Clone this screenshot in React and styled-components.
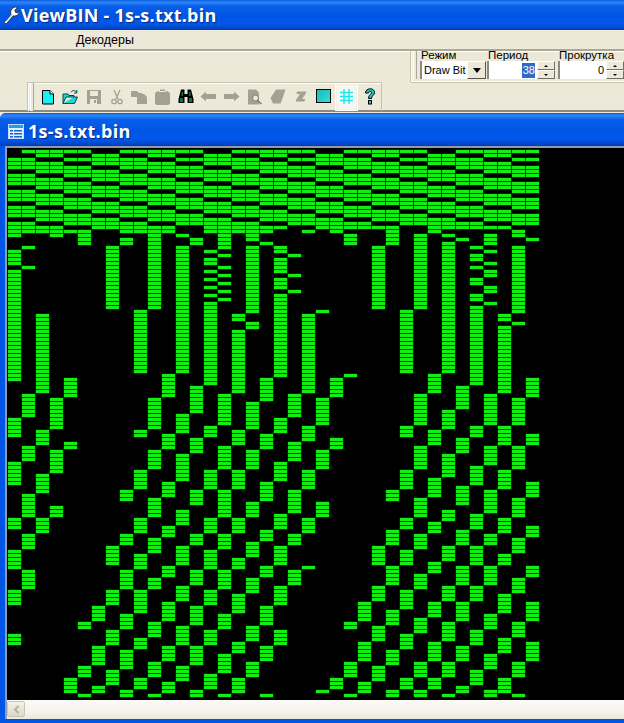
import React from 'react'
import styled, { createGlobalStyle } from 'styled-components'

// bit plot: rows set per column, index = column, values = row ranges below the header pattern
const COLUMNS = [
  '20-21,25-28,30-57,67-71,78-83,92-94,100-104,110-113,121-123',
  '20,24,29,61-66,74-77,86-91,96-99,105-109',
  '20,41-60,70-73,81-85,92-95',
  '20-21,62-69,75-80,89-91',
  '20,57-61,73-74,132-135',
  '20-23,118-119,129-131,136',
  '114-117,124-128,134-135',
  '24-39,99-103,110-113,120-123,130-133',
  '20,22-23,85-87,96-98,105-109,116-119,125-129,135-136',
  '20,40-55,70-71,80-84,92-95,101-104,110-115,122-124,132-134',
  '20-39,62-69,75-79,87-91,97-100,107-109,118-121,128-131,136',
  '20,56-61,71-74,83-86,94-96,104-106,113-117,124-127,133-135',
  '21,24-55,66-70,76-82,90-93,99-103,109-112,119-123,129-132',
  '22-23,59-65,72-75,85-88,96-98,105-108,114-118,124-128,135-136',
  '20,25,27-28,30,32,34,36,38-58,69-71,80-84,92-95,100-104,110-113,120-123,131-134',
  '20-24,26,29,31,33,35,37,61-68,74-79,85-91,96-99,105-109,116-119,126-130,136',
  '20,41-42,45-60,70-73,80-84,92-95,102-104,111-115,123-125,132-135',
  '20-22,24-40,43-44,63-69,75-79,88-91,98-101,107-110,119-122,128-131',
  '20,23,57-62,71-74,83-87,95-97,104-106,114-118,124-127,136',
  '24-25,27-30,32-34,36-56,67-70,78-82,91-94,99-103,109-113,120-123',
  '26,31,35,61-66,73-77,85-90,96-98,105-108',
  '20,41-60,69-72,80-84,92-95,104',
  '40,62-68,75-79,88-91,135',
  '20,57-61,72-74,132-134',
  '21-23,56,118-119,128-131,136',
  '113-117,123-127,133-135',
  '24-39,99-103,109-112,119-122,129-132',
  '20-23,85-87,95-98,104-108,115-118,125-128,135-136',
  '40-55,69-71,80-84,92-94,100-103,110-114,121-124,132-134',
  '21-39,61-68,74-79,87-91,96-99,106-109,117-120,128-131,135-136',
  '20,56-60,70-73,82-86,93-95,103-105,113-116,123-127,132-134',
  '21,23-55,65-69,76-81,90-92,99-102,109-112,118-122,128-131,136',
  '22,59-64,72-75,84-88,95-98,104-108,113-117,124-127,134-135',
  '24,26-27,29,32-33,36-37,39-58,69-71,79-83,91-94,99-103,109-112,120-123,130-133',
  '21-23,25,28,30-31,34-35,38,61-68,74-78,85-90,96-98,104-108,116-119,126-129,135-136',
  '41-42,44-60,69-73,80-84,92-95,101-103,111-115,122-125,132-135',
  '20-21,24-40,43,62-68,74-79,87-91,97-100,107-110,118-121,128-131,136',
  '22,57-61,71-73,83-86,94-96,104-106,113-117,123-127',
]

// the first 20 rows repeat: each pair of columns has a blank row every 4, its phase moving by pair
const headerOn = (col, row) => {
  const pair = Math.floor(col / 2)
  const blank = (pair + 1) % 4
  if (row % 4 === blank) return false
  if (row === 0 && col === 0) return false
  if (blank === 3 && row === 1) return false
  return true
}

const buildBits = () => {
  let d = ''
  const bar = (c, r) => { d += `M${c * 14} ${r * 4}h13v3h-13z` }
  COLUMNS.forEach((spec, c) => {
    for (let r = 0; r < 20; r++) if (headerOn(c, r)) bar(c, r)
    spec.split(',').forEach(part => {
      const [from, to] = part.split('-').map(Number)
      for (let r = from; r <= (to || from); r++) bar(c, r)
    })
  })
  return d
}

const Global = createGlobalStyle`
  html, body { margin: 0; padding: 0; background: #ece9d8; }
  * { box-sizing: border-box; }
`

const Page = styled.div`
  width: 624px;
  height: 723px;
  overflow: hidden;
  display: flex;
  flex-direction: column;
  background: #ece9d8;
  font-family: "Liberation Sans", Arial, sans-serif;
  color: #000;
`

const blueBar = `linear-gradient(180deg, #0a5ce0 0%, #2b86f5 8%, #0a5fe8 20%, #0055e5 55%, #0058ea 80%, #0048cc 92%, #003fb0 100%)`

const TitleBar = styled.div`
  height: 30px;
  flex: none;
  display: flex;
  align-items: center;
  padding-left: 2px;
  gap: 1px;
  background: ${blueBar};
`

const TitleText = styled.span`
  font-family: "Open Sans", "DejaVu Sans", sans-serif;
  font-weight: 700;
  color: #fff;
  font-size: ${p => p.$size}px;
  letter-spacing: ${p => p.$spacing}px;
  text-shadow: 1px 1px 1px #0a2a80;
  white-space: nowrap;
`

const MenuBar = styled.div`
  height: 21px;
  flex: none;
  display: flex;
  align-items: center;
  padding-left: 76px;
  font-size: 12.5px;
  border-bottom: 2px solid;
  border-color: #aca899;
  box-shadow: 0 1px 0 #fff;
`

const Docks = styled.div`
  height: 61px;
  flex: none;
  display: flex;
  flex-direction: column;
  border-bottom: 2px solid #8c8a80;
`

const TopDock = styled.div`
  height: 31px;
  display: flex;
  justify-content: flex-end;
`

const ModeBar = styled.div`
  width: 213px;
  display: flex;
  align-items: flex-end;
  gap: 1px;
  padding: 0 0 2px 1px;
  border-bottom: 1px solid #fff;
  border-left: 1px solid #fff;
  box-shadow: -1px 0 0 #c5c2b0, 0 1px 0 #c5c2b0;
`

const Grip = styled.div`
  width: 4px;
  align-self: stretch;
  margin-right: ${p => p.$gap}px;
  border-left: 1px solid #fff;
  border-right: 1px solid #aca899;
  background: #ece9d8;
  flex: none;
`

const Field = styled.div`
  width: ${p => p.$w}px;
  margin-right: ${p => p.$gap || 0}px;
  flex: none;
  display: flex;
  flex-direction: column;
`

const FieldLabel = styled.div`
  font-size: 11.5px;
  line-height: 12px;
  padding-left: 1px;
  white-space: nowrap;
`

const Controls = styled.div`
  display: flex;
  height: 18px;
`

const Combo = styled.div`
  flex: 1;
  display: flex;
  align-items: center;
  background: #fff;
  border-left: 2px solid #8c8a80;
  font-size: 11px;
  padding-left: 2px;
  white-space: nowrap;
`

const DropButton = styled.div`
  width: 19px;
  flex: none;
  display: flex;
  align-items: center;
  justify-content: center;
  background: #ece9d8;
  border: 1px solid;
  border-color: #fff #555 #555 #fff;
  &::after {
    content: '';
    border: 4px solid transparent;
    border-top: 5px solid #000;
    border-bottom: 0;
  }
`

const SpinInput = styled.div`
  flex: 1;
  display: flex;
  align-items: center;
  justify-content: flex-end;
  background: #fff;
  border-left: 2px solid #8c8a80;
  font-size: 11px;
  padding-right: 2px;
`

const Selected = styled.span`
  background: #316ac5;
  color: #fff;
  padding: 0 0 0 1px;
  line-height: 15px;
`

const Spinner = styled.div`
  width: 18px;
  flex: none;
  display: flex;
  flex-direction: column;
`

const SpinHalf = styled.div`
  flex: 1;
  display: flex;
  align-items: center;
  justify-content: center;
  background: #ece9d8;
  border: 1px solid;
  border-color: #fff #716f64 #716f64 #fff;
  &::after {
    content: '';
    border: 2px solid transparent;
    ${p => (p.$down ? 'border-top: 2px solid #000; border-bottom: 0;' : 'border-bottom: 2px solid #000; border-top: 0;')}
  }
`

const BottomDock = styled.div`
  flex: 1;
  display: flex;
  padding-left: 27px;
`

const ToolStrip = styled.div`
  width: 355px;
  height: 29px;
  display: flex;
  align-items: stretch;
  padding-left: 2px;
  border-top: 1px solid #c5c2b0;
  border-left: 1px solid #c5c2b0;
  border-right: 1px solid #c5c2b0;
  box-shadow: inset 1px 1px 0 #fff;
`

const ToolButton = styled.div`
  width: 23px;
  flex: none;
  display: flex;
  align-items: center;
  justify-content: center;
  padding-bottom: 1px;
  ${p => p.$active && `
    background: #f7f6f0;
    border: 1px solid #fff;
    box-shadow: inset 0 0 0 1px #f2f0e6;
  `}
`

const ChildWindow = styled.div`
  flex: 1;
  min-height: 0;
  display: flex;
  flex-direction: column;
  background: #0055e5;
  border-radius: 6px 0 0 0;
  margin-top: 1px;
`

const ChildTitle = styled.div`
  height: 33px;
  flex: none;
  display: flex;
  align-items: center;
  gap: 4px;
  padding: 3px 0 0 8px;
  background: ${blueBar};
  border-radius: 6px 0 0 0;
`

const ChildBody = styled.div`
  flex: 1;
  min-height: 0;
  display: flex;
  flex-direction: column;
  margin: 0 0 4px 5px;
  border-left: 2px solid #8d9bb5;
  border-top: 2px solid #8d9bb5;
`

const BitArea = styled.div`
  flex: 1;
  min-height: 0;
  background: #000;
  padding: 2px 0 0 1px;
  overflow: hidden;
`

const BitPlot = styled.svg`
  display: block;
  overflow: visible;
`

const HScroll = styled.div`
  height: 19px;
  flex: none;
  padding: 1px 0;
  background: linear-gradient(180deg, #fbfaf6 0%, #f6f4ec 60%, #ebe8dc 100%);
`

const ScrollArrow = styled.div`
  width: 18px;
  height: 16px;
  display: flex;
  align-items: center;
  justify-content: center;
  border: 1px solid #c9c6b4;
  border-radius: 2px;
  background: linear-gradient(180deg, #f3f1e6, #dcd9c8);
`

const WrenchIcon = () => (
  <svg width="18" height="20" viewBox="0 0 18 20">
    <path d="M2 17.5 L9 9.5 C7.8 6.5 9.5 2.5 13.5 2 L16 2.3 L12.8 5.2 L13.6 7.4 L16 7.9 L17.5 5 C18 8.8 14.8 11.8 11.2 10.8 L4.2 19 Z" fill="#fff" stroke="#33343c" strokeWidth="1" />
    <path d="M3.5 16.5 L9.5 10" stroke="#9aa0b0" strokeWidth="1" />
  </svg>
)

const DocWinIcon = () => (
  <svg width="16" height="15" viewBox="0 0 16 15">
    <rect x="0.5" y="0.5" width="15" height="14" fill="#dff4ff" stroke="#c8ddf5" />
    <rect x="1" y="1" width="14" height="3" fill="#1fa0e8" />
    <rect x="2" y="6" width="3" height="1.5" fill="#1a5fd0" />
    <rect x="6" y="6" width="8" height="1.5" fill="#1a5fd0" />
    <rect x="2" y="9" width="3" height="1.5" fill="#1a5fd0" />
    <rect x="6" y="9" width="8" height="1.5" fill="#1a5fd0" />
    <rect x="2" y="12" width="3" height="1.5" fill="#1a5fd0" />
    <rect x="6" y="12" width="8" height="1.5" fill="#1a5fd0" />
  </svg>
)

const GRAY = '#a3a194'

const NewIcon = () => (
  <svg width="16" height="16" viewBox="0 0 16 16">
    <path d="M2.5 1.5 H10 L13.5 5 V15 H2.5 Z" fill="#19f0f0" stroke="#000" />
    <path d="M10 1.5 V5 H13.5" fill="#fff" stroke="#000" />
  </svg>
)
const OpenIcon = () => (
  <svg width="17" height="16" viewBox="0 0 17 16">
    <path d="M1 14.5 V5 H6 L7 6.5 H12 V8 H4 L1 14.5 H12.5 L15.5 8 H12" fill="#19d8d8" stroke="#004848" />
    <path d="M9 3.2 C10.5 1 13 1 14.5 3.5 M14.8 1 V4 H12" fill="none" stroke="#004848" />
  </svg>
)
const SaveIcon = () => (
  <svg width="16" height="16" viewBox="0 0 16 16">
    <path d="M1 1 H15 V15 H1 Z" fill={GRAY} />
    <rect x="4" y="2" width="8" height="5" fill="#ece9d8" />
    <rect x="4" y="10" width="7" height="5" fill="#ece9d8" />
    <rect x="8" y="11" width="2" height="3" fill={GRAY} />
  </svg>
)
const CutIcon = () => (
  <svg width="14" height="16" viewBox="0 0 14 16" fill="none" stroke={GRAY} strokeWidth="1.3">
    <path d="M4 1 L8 10 M10 1 L6 10" />
    <circle cx="4" cy="12.5" r="2.2" />
    <circle cx="10" cy="12.5" r="2.2" />
  </svg>
)
const CopyIcon = () => (
  <svg width="17" height="15" viewBox="0 0 17 15" fill={GRAY}>
    <path d="M0 2 H6 L8 4 H11 V8 H0 Z" />
    <path d="M6 5 H13 L16 8 V15 H6 Z" />
  </svg>
)
const PasteIcon = () => (
  <svg width="15" height="16" viewBox="0 0 15 16" fill={GRAY}>
    <path d="M3 2 H5 V0.5 H10 V2 H12 L15 4 V15 L13 16 H2 L0 15 V4 Z" />
    <rect x="4" y="2" width="7" height="1" fill="#ece9d8" />
  </svg>
)
const FindIcon = () => (
  <svg width="16" height="15" viewBox="0 0 16 15">
    <path d="M3 0.5 H6.5 V5 H9.5 V0.5 H13 L15.5 10 V14 H9.5 V8 H6.5 V14 H0.5 V10 Z" fill="#000" />
    <rect x="2" y="9" width="3" height="4" fill="#0e6e52" />
    <rect x="11" y="9" width="3" height="4" fill="#0e6e52" />
    <rect x="3.5" y="3" width="1.5" height="4" fill="#0e6e52" />
    <rect x="11" y="3" width="1.5" height="4" fill="#0e6e52" />
  </svg>
)
const ArrowIcon = ({ flip }) => (
  <svg width="17" height="11" viewBox="0 0 17 11">
    <path d={flip ? 'M16.5 5.5 L11 0.5 V3 H1 V8 H11 V10.5 Z' : 'M0.5 5.5 L6 0.5 V3 H16 V8 H6 V10.5 Z'} fill={GRAY} />
  </svg>
)
const FindDocIcon = () => (
  <svg width="16" height="16" viewBox="0 0 16 16">
    <path d="M1 0.5 H9 L12 3.5 V15.5 H1 Z" fill={GRAY} />
    <circle cx="8.5" cy="9" r="3" fill="#ece9d8" stroke="#7e7c70" />
    <path d="M10.5 11.5 L14.5 15" stroke="#7e7c70" strokeWidth="1.6" />
  </svg>
)
const ShapeIcon = () => (
  <svg width="16" height="15" viewBox="0 0 16 15">
    <path d="M6 0.5 H15.5 L13 8 L10.5 14.5 H3 L0.5 9 Z" fill={GRAY} />
  </svg>
)
const ItalicIcon = () => (
  <svg width="12" height="11" viewBox="0 0 12 11">
    <path d="M2 0.5 H11.5 L10.5 3 L7 8 H10 L9.5 10.5 H0.5 L1.5 8 L5 3 H1.5 Z" fill={GRAY} />
  </svg>
)
const FillIcon = () => (
  <svg width="15" height="15" viewBox="0 0 15 15">
    <defs>
      <linearGradient id="fillGrad" x1="0" y1="0" x2="1" y2="1">
        <stop offset="0" stopColor="#1fb8b4" />
        <stop offset="1" stopColor="#29e2dc" />
      </linearGradient>
    </defs>
    <rect x="0.5" y="0.5" width="14" height="13" fill="url(#fillGrad)" stroke="#000" />
  </svg>
)
const GridIcon = () => (
  <svg width="13" height="15" viewBox="0 0 13 15" stroke="#19eaea" strokeWidth="1.4">
    <path d="M4 0 V15 M9 0 V15 M0 3.5 H13 M0 7.5 H13 M0 11.5 H13" />
  </svg>
)
const HelpIcon = () => (
  <svg width="12" height="17" viewBox="0 0 12 17">
    <path d="M1.5 5 C1.5 -0.5 10.5 -0.5 10.5 4.5 C10.5 7.5 7.5 7.5 7.5 10.5 H4.5 C4.5 6.5 7.5 6.5 7.5 4.5 C7.5 3 4.5 3 4.5 5 Z" fill="#19c8c0" stroke="#000" />
    <rect x="4.5" y="12.5" width="3" height="3.5" fill="#19c8c0" stroke="#000" />
  </svg>
)

const TOOLS = [
  <NewIcon />, <OpenIcon />, <SaveIcon />, <CutIcon />, <CopyIcon />, <PasteIcon />, <FindIcon />,
  <ArrowIcon />, <ArrowIcon flip />, <FindDocIcon />, <ShapeIcon />, <ItalicIcon />, <FillIcon />,
]

const SpinBox = () => (
  <Spinner>
    <SpinHalf />
    <SpinHalf $down />
  </Spinner>
)

const App = () => (
  <Page>
    <Global />
    <TitleBar>
      <WrenchIcon />
      <TitleText $size={18} $spacing={0.25}>ViewBIN - 1s-s.txt.bin</TitleText>
    </TitleBar>
    <MenuBar>Декодеры</MenuBar>
    <Docks>
      <TopDock>
        <ModeBar>
          <Grip $gap={2} />
          <Field $w={66}>
            <FieldLabel>Режим</FieldLabel>
            <Controls>
              <Combo>Draw Bit</Combo>
              <DropButton />
            </Controls>
          </Field>
          <Field $w={68} $gap={2}>
            <FieldLabel>Период</FieldLabel>
            <Controls>
              <SpinInput><Selected>38</Selected></SpinInput>
              <SpinBox />
            </Controls>
          </Field>
          <Field $w={66}>
            <FieldLabel>Прокрутка</FieldLabel>
            <Controls>
              <SpinInput>0</SpinInput>
              <SpinBox />
            </Controls>
          </Field>
        </ModeBar>
      </TopDock>
      <BottomDock>
        <ToolStrip>
          <Grip $gap={2} />
          {TOOLS.map((icon, i) => <ToolButton key={i}>{icon}</ToolButton>)}
          <ToolButton $active><GridIcon /></ToolButton>
          <ToolButton><HelpIcon /></ToolButton>
        </ToolStrip>
      </BottomDock>
    </Docks>
    <ChildWindow>
      <ChildTitle>
        <DocWinIcon />
        <TitleText $size={18} $spacing={0.3}>1s-s.txt.bin</TitleText>
      </ChildTitle>
      <ChildBody>
        <BitArea>
          <BitPlot width="540" height="548" viewBox="0 0 540 548">
            <path d={buildBits()} fill="#14ee14" stroke="#14ee14" strokeOpacity="0.3" strokeWidth="1" />
          </BitPlot>
        </BitArea>
        <HScroll>
          <ScrollArrow>
            <svg width="7" height="9" viewBox="0 0 7 9"><path d="M5.5 1 L2 4.5 L5.5 8" fill="none" stroke="#b4b1a0" strokeWidth="2" /></svg>
          </ScrollArrow>
        </HScroll>
      </ChildBody>
    </ChildWindow>
  </Page>
)

export default App
